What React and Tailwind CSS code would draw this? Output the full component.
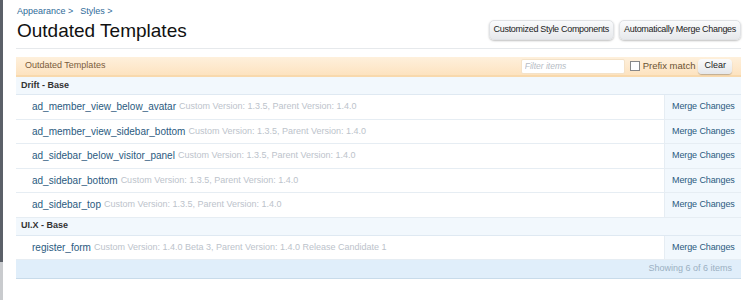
import React from "react";

const groups = [
  {
    title: "Drift - Base",
    items: [
      { name: "ad_member_view_below_avatar", info: "Custom Version: 1.3.5, Parent Version: 1.4.0" },
      { name: "ad_member_view_sidebar_bottom", info: "Custom Version: 1.3.5, Parent Version: 1.4.0" },
      { name: "ad_sidebar_below_visitor_panel", info: "Custom Version: 1.3.5, Parent Version: 1.4.0" },
      { name: "ad_sidebar_bottom", info: "Custom Version: 1.3.5, Parent Version: 1.4.0" },
      { name: "ad_sidebar_top", info: "Custom Version: 1.3.5, Parent Version: 1.4.0" },
    ],
  },
  {
    title: "UI.X - Base",
    items: [
      {
        name: "register_form",
        info: "Custom Version: 1.4.0 Beta 3, Parent Version: 1.4.0 Release Candidate 1",
      },
    ],
  },
];

const App = () => {
  return (
    <div className="flex h-[300px] w-[755px] bg-white font-['Liberation_Sans',sans-serif]">
      {/* left edge strip */}
      <div className="flex w-[3px] flex-col">
        <div className="h-[262px] bg-[#5b6068]"></div>
        <div className="flex-1 bg-[#c9cbce]"></div>
      </div>

      <div className="ml-[13px] w-[725px]">
        {/* header */}
        <div className="flex items-end justify-between border-b border-[#e6e9ec] pb-[5px] pt-[5px]">
          <div>
            <div className="flex gap-[7px] pl-[1px] text-[9px] leading-[12px] text-[#2f6b99]">
              <span>Appearance &gt;</span>
              <span>Styles &gt;</span>
            </div>
            <h1 className="mt-[2px] pl-[1px] text-[19px] leading-[24px] text-[#111]">
              Outdated Templates
            </h1>
          </div>
          <div className="mb-[3px] flex gap-[5px]">
            <button className="h-[20px] whitespace-nowrap rounded-[5px] border border-[#e0e2e5] bg-gradient-to-b from-[#fafbfc] to-[#e7e9ec] px-[4px] text-[9px] tracking-[-0.3px] text-[#222] shadow-[0_1px_2px_rgba(0,0,0,0.25)]">
              Customized Style Components
            </button>
            <button className="h-[20px] whitespace-nowrap rounded-[5px] border border-[#e0e2e5] bg-gradient-to-b from-[#fafbfc] to-[#e7e9ec] px-[4px] text-[9px] tracking-[-0.3px] text-[#222] shadow-[0_1px_2px_rgba(0,0,0,0.25)]">
              Automatically Merge Changes
            </button>
          </div>
        </div>

        {/* list */}
        <div className="mt-[8px]">
          <div className="flex h-[20px] items-center justify-between border-b-2 border-[#f8d9ad] bg-gradient-to-b from-[#fef0dc] to-[#fde3c0] pl-[9px] pr-[9px]">
            <span className="text-[9px] text-[#7a5c3c]">Outdated Templates</span>
            <div className="flex items-center">
              <input
                type="text"
                placeholder="Filter items"
                className="h-[15px] w-[104px] rounded-[2px] border border-[#f4e2c8] bg-white px-[3px] text-[8.5px] italic placeholder:text-[#b6bcc4] focus:outline-none"
              />
              <span className="ml-[5px] h-[10px] w-[10px] border border-[#888] bg-white"></span>
              <span className="ml-[3px] text-[9.5px] text-[#6b5233]">Prefix match</span>
              <button className="ml-[3px] h-[15px] rounded-[4px] bg-gradient-to-b from-[#fbfbfb] to-[#e5e7ea] px-[6px] text-[9px] text-[#222] shadow-[0_1px_1px_rgba(0,0,0,0.25)]">
                Clear
              </button>
            </div>
          </div>

          {groups.map((group) => (
            <div key={group.title}>
              <div className="flex h-[18px] items-center border-b border-[#dfe9f2] bg-[#f2f8fd] pl-[5px] text-[9px] font-bold text-[#333]">
                {group.title}
              </div>
              {group.items.map((item) => (
                <div key={item.name} className="flex h-[24.5px] border-b border-[#e6edf3]">
                  <div className="flex flex-1 items-center pl-[16px]">
                    <span className="text-[10px] text-[#2a5a80]">{item.name}</span>
                    <span className="ml-[3px] text-[9px] text-[#bcc3cb]">{item.info}</span>
                  </div>
                  <div className="flex w-[77px] items-center whitespace-nowrap border-l border-[#e6edf3] bg-[#f2f8fd] pl-[7px] text-[9px] tracking-[-0.1px] text-[#2a5a80]">
                    Merge Changes
                  </div>
                </div>
              ))}
            </div>
          ))}

          <div className="flex h-[19px] items-center justify-end border-b border-[#c8dbea] bg-[#e0eefa] pr-[9px] text-[9px] text-[#9bb0c2]">
            Showing 6 of 6 items
          </div>
        </div>
      </div>
    </div>
  );
};

export default App;
